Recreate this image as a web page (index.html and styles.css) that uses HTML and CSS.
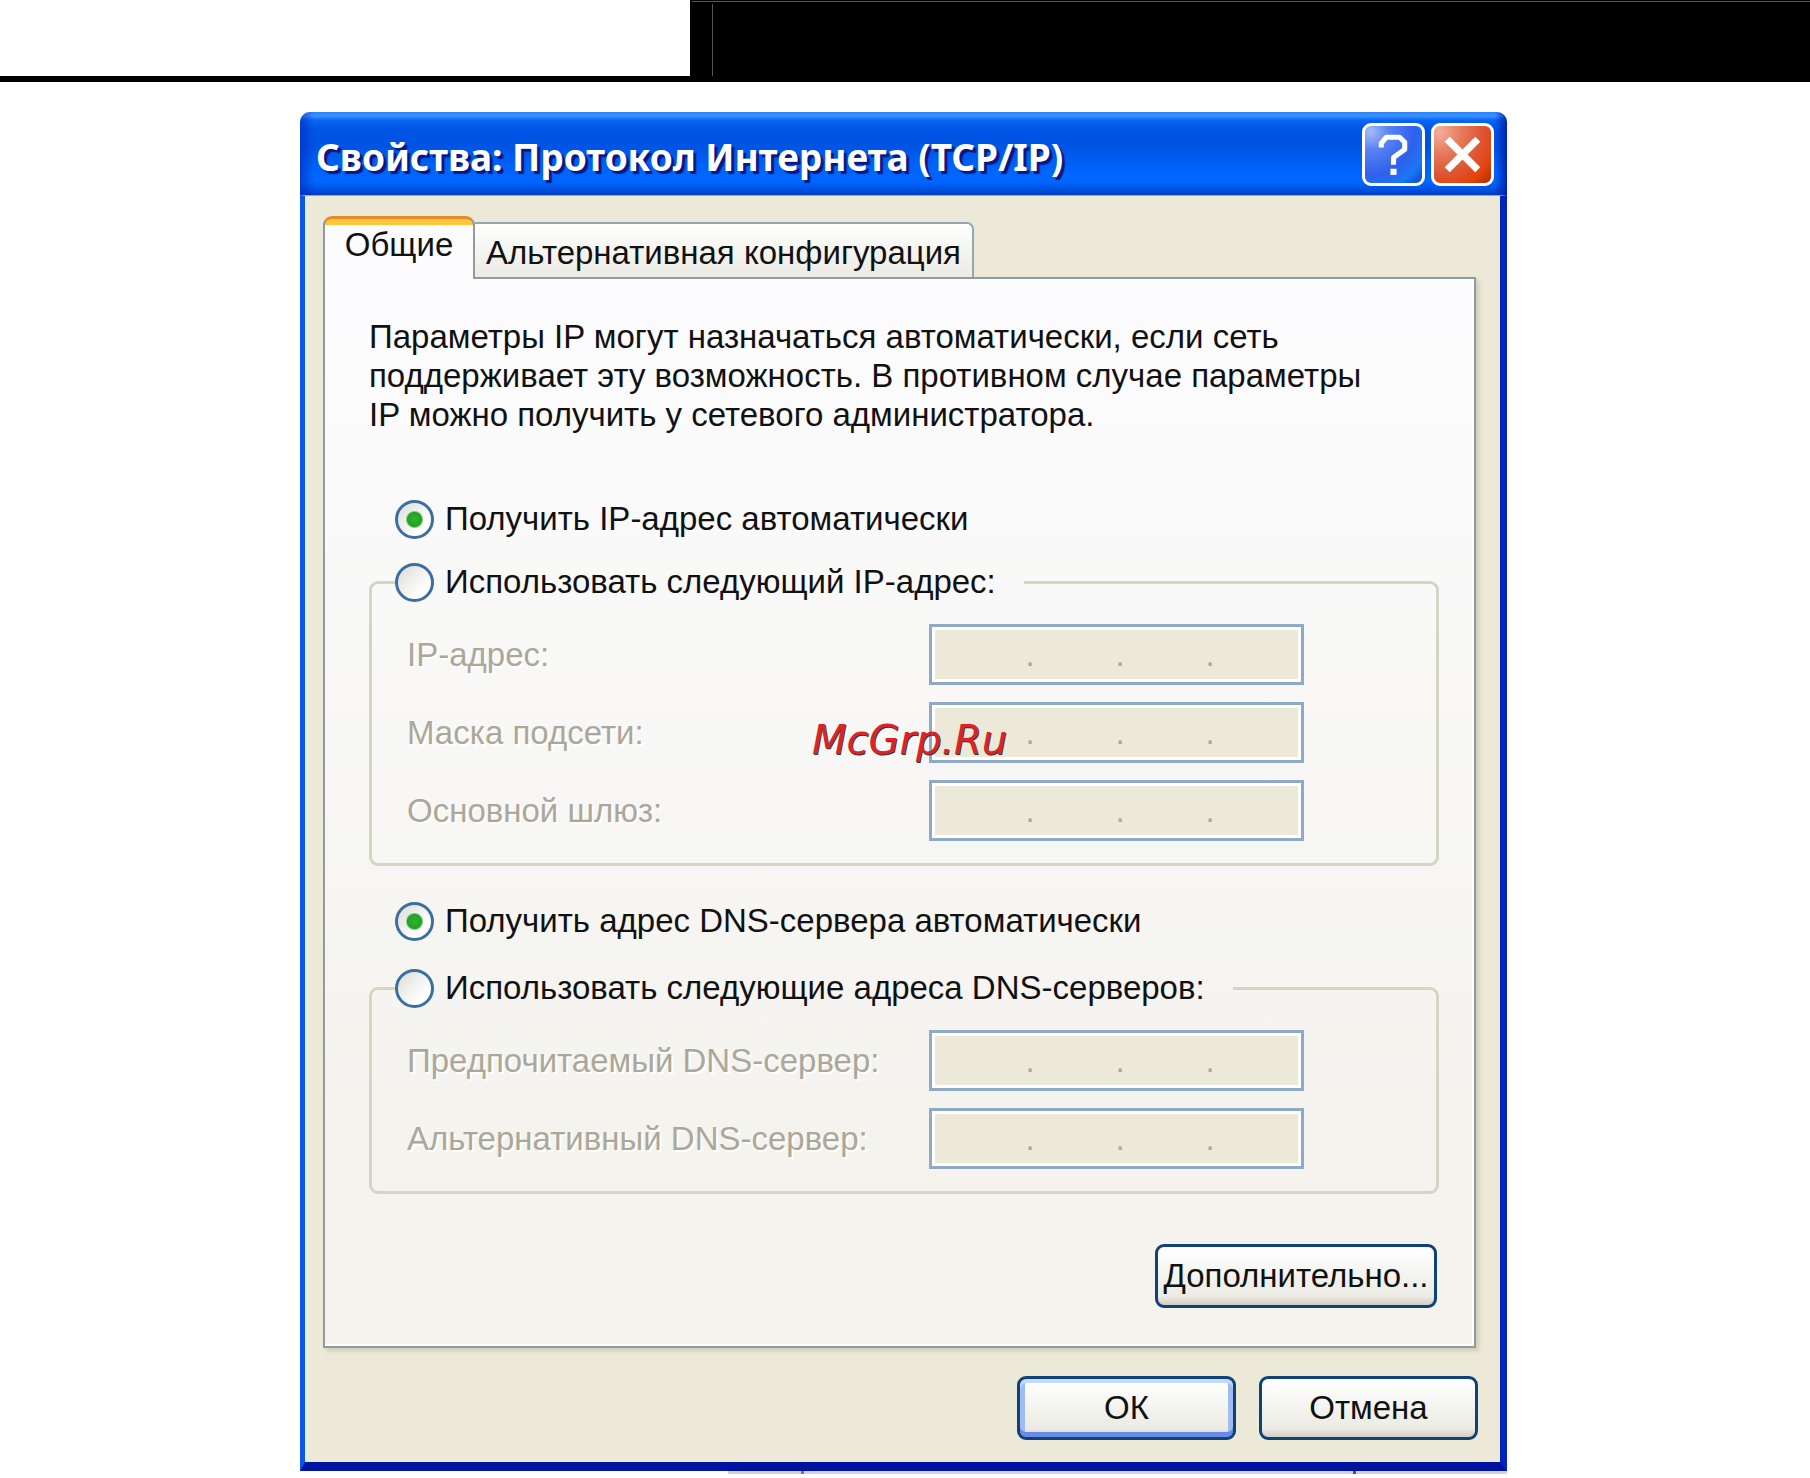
FILE: index.html
```html
<!DOCTYPE html>
<html lang="ru">
<head>
<meta charset="utf-8">
<title>Свойства: Протокол Интернета (TCP/IP)</title>
<link rel="stylesheet" href="styles.css">
</head>
<body>
<header class="page-head"><div class="head-blank"></div><div class="head-band"><div class="head-cell"></div></div></header>
<main class="page">
<form class="dialog">
  <div class="titlebar">
    <h1 class="title">Свойства: Протокол Интернета (TCP/IP)</h1>
    <button class="caption-btn help" type="button" aria-label="Справка">
      <svg viewBox="0 0 56 56"><path d="M16 21V17L21 11H34L39 16V23L28 31V38" fill="none" stroke="#fff" stroke-width="5" stroke-linejoin="round"/><rect x="25" y="42" width="6" height="6" fill="#fff"/></svg>
    </button>
    <button class="caption-btn close" type="button" aria-label="Закрыть">
      <svg viewBox="0 0 56 56"><path d="M13 13L43 43M43 13L13 43" fill="none" stroke="#fff" stroke-width="7"/></svg>
    </button>
  </div>
  <div class="body">
    <div class="tabs" role="tablist">
      <button class="tab active" type="button" role="tab" aria-selected="true">Общие</button>
      <button class="tab" type="button" role="tab" aria-selected="false">Альтернативная конфигурация</button>
    </div>
    <section class="panel">
      <p class="intro">Параметры IP могут назначаться автоматически, если сеть<br>поддерживает эту возможность. В противном случае параметры<br>IP можно получить у сетевого администратора.</p>
      <label class="choice"><input class="radio" type="radio" name="ip" checked>Получить IP-адрес автоматически</label>
      <fieldset class="group">
        <legend class="legend"><label class="choice"><input class="radio" type="radio" name="ip">Использовать следующий IP-адрес:</label></legend>
        <div class="row"><label for="ip1">IP-адрес:</label><div class="octets"><input id="ip1" disabled><span>.</span><input aria-label="IP-адрес, 2" disabled><span>.</span><input aria-label="IP-адрес, 3" disabled><span>.</span><input aria-label="IP-адрес, 4" disabled></div></div>
        <div class="row"><label for="mask1">Маска подсети:</label><div class="octets"><input id="mask1" disabled><span>.</span><input aria-label="Маска, 2" disabled><span>.</span><input aria-label="Маска, 3" disabled><span>.</span><input aria-label="Маска, 4" disabled></div><div class="watermark">McGrp.Ru</div></div>
        <div class="row"><label for="gw1">Основной шлюз:</label><div class="octets"><input id="gw1" disabled><span>.</span><input aria-label="Шлюз, 2" disabled><span>.</span><input aria-label="Шлюз, 3" disabled><span>.</span><input aria-label="Шлюз, 4" disabled></div></div>
      </fieldset>
      <label class="choice dns"><input class="radio" type="radio" name="dns" checked>Получить адрес DNS-сервера автоматически</label>
      <fieldset class="group dns-group">
        <legend class="legend"><label class="choice"><input class="radio" type="radio" name="dns">Использовать следующие адреса DNS-серверов:</label></legend>
        <div class="row"><label for="dns1">Предпочитаемый DNS-сервер:</label><div class="octets"><input id="dns1" disabled><span>.</span><input aria-label="DNS, 2" disabled><span>.</span><input aria-label="DNS, 3" disabled><span>.</span><input aria-label="DNS, 4" disabled></div></div>
        <div class="row"><label for="alt1">Альтернативный DNS-сервер:</label><div class="octets"><input id="alt1" disabled><span>.</span><input aria-label="DNS 2, 2" disabled><span>.</span><input aria-label="DNS 2, 3" disabled><span>.</span><input aria-label="DNS 2, 4" disabled></div></div>
      </fieldset>
      <div class="more"><button class="btn wide" type="button">Дополнительно...</button></div>
    </section>
    <div class="actions">
      <button class="btn default" type="submit">ОК</button>
      <button class="btn" type="button">Отмена</button>
    </div>
  </div>
</form>
<div class="under"><i class="under-a"></i><i class="under-b"></i><i class="under-c"></i></div>
</main>
</body>
</html>
```
FILE: styles.css
```css
* { box-sizing: border-box; }
body {
  margin: 0;
  background: #fff;
  color: #111;
  font: 33px/40px "Liberation Sans", Arial, sans-serif;
}
button, input { font: inherit; color: inherit; margin: 0; }

/* page header band */
.page-head { display: flex; height: 82px; border-bottom: 6px solid #000; }
.head-blank { flex: 0 0 690px; }
.head-band { flex: 1; display: flex; padding: 1px 0 0 2px; background: #000; }
.head-cell { flex: 1; border-top: 1px solid #555; padding-left: 20px; }
.head-cell::before { content: ""; display: block; height: 72px; margin-top: 2px; border-left: 1px solid #555; }

.page { padding: 30px 303px 0 300px; }
.dialog {
  background: #ece9d8;
  border-radius: 10px 10px 0 0;
  overflow: hidden;
}
.titlebar {
  display: flex;
  align-items: center;
  gap: 6px;
  height: 83px;
  padding: 2px 13px 0 16px;
  background:
    linear-gradient(90deg, rgba(0, 40, 190, .6), transparent 14px),
    linear-gradient(270deg, rgba(0, 20, 160, .8), transparent 12px),
    linear-gradient(#2a84f5 0, #3a93ff 4px, #0a66f5 8px, #0054e3 18px, #0054e3 34px, #0066ff 62px, #0066ff 70px, #0050e0 78px, #003cc0 83px);
}
.title {
  flex: 1;
  margin: 0;
  padding-top: 4px;
  color: #fff;
  font: 700 37px/48px "Noto Sans", "Open Sans", sans-serif;
  text-shadow: 3px 3px 1px #0a1883;
  white-space: nowrap;
}
.caption-btn {
  width: 63px;
  height: 63px;
  padding: 0;
  border: 3px solid #fff;
  border-radius: 9px;
}
.caption-btn svg { display: block; width: 100%; height: 100%; }
.help { background: radial-gradient(circle at 10% 10%, #a5bcf8 0, #5a82f2 25%, #2f60ec 60%, #1a78f5 80%, #0b45d0 100%); }
.close { background: radial-gradient(circle at 10% 10%, #f3b09c 0, #e67a5c 30%, #dd5430 60%, #e5430a 80%, #a82a05 100%); }

.body {
  padding: 20px 24px 22px 18px;
  border: solid;
  border-width: 1px 7px 9px 5px;
  border-color: #8fa6d8 #0024c0 #0012a0 #0a56e6;
}

/* tabs */
.tabs { display: flex; align-items: flex-end; height: 61px; }
.tab {
  height: 55px;
  padding: 4px 0 0;
  width: 499px;
  border: 2px solid #91a7b4;
  border-left-width: 0;
  border-bottom: 0;
  border-radius: 0 7px 0 0;
  background: linear-gradient(#fff, #f4f4f0 50%, #ecebe6);
  white-space: nowrap;
}
.tab.active {
  position: relative;
  width: 152px;
  height: 63px;
  margin-bottom: -2px;
  padding: 0 0 8px;
  border: 2px solid #919b9c;
  border-top: 3px solid #e68b2c;
  border-bottom: 0;
  border-radius: 9px 9px 0 0;
  background: linear-gradient(#ffc73c 6px, #fcfcfe 6px);
}

.panel {
  padding: 38px 35px 38px 44px;
  border: 2px solid #919b9c;
  background: linear-gradient(#fcfcfe, #f4f3ee 80%);
  box-shadow: 3px 3px 4px #cfccbc, inset -2px -2px 0 #fff;
}
.intro { margin: 0 0 65px; line-height: 39px; white-space: nowrap; }
.choice { display: flex; align-items: center; gap: 11px; margin-left: 26px; height: 40px; white-space: nowrap; }
.radio {
  appearance: none;
  flex: none;
  width: 39px;
  height: 39px;
  border: 3px solid #3c6f9f;
  border-radius: 50%;
  background: linear-gradient(135deg, #dcdcd7, #fff 75%);
}
.radio:checked {
  background:
    radial-gradient(circle, #2fb52f 0, #21a121 7px, transparent 9px),
    linear-gradient(135deg, #dcdcd7, #fff 75%);
}
.group {
  margin: 23px 0 0;
  padding: 22px 132px 22px 35px;
  border: 3px solid #d5d5c4;
  border-radius: 9px;
  min-width: 0;
}
.legend { margin-left: -12px; padding: 0 28px 0 0; }
.legend .choice { margin: 0; }
.row {
  position: relative;
  display: flex;
  align-items: center;
  justify-content: space-between;
  height: 61px;
  color: #aca899;
  white-space: nowrap;
  text-shadow: 2px 2px 0 #fff;
}
.row + .row { margin-top: 17px; }
.octets {
  flex: none;
  display: flex;
  width: 375px;
  height: 61px;
  padding-left: 13px;
  border: 3px solid #8eaac6;
  background: #ece9d8;
  box-shadow: inset 0 0 0 3px #fff;
  line-height: 55px;
  text-shadow: none;
}
.octets input { width: 80px; min-width: 0; padding: 0; border: 0; background: none; }
.octets span { width: 10px; text-align: center; }
.watermark {
  position: absolute;
  left: 405px;
  top: 16px;
  color: #dc2328;
  font: italic 40px/44px "DejaVu Sans", sans-serif;
  text-shadow: 1px 1px 0 #333;
}
.dns { margin-top: 35px; }
.dns-group { margin-top: 27px; }
.more { display: flex; justify-content: flex-end; margin: 50px 2px 0 0; }

.btn {
  width: 219px;
  height: 64px;
  padding: 0;
  border: 3px solid #0f4377;
  border-radius: 9px;
  background: linear-gradient(#fff, #f3f3ef 50%, #ecebe5 85%, #d3cec3);
  white-space: nowrap;
}
.wide { width: 282px; }
.default { box-shadow: inset 0 4px 0 #c3dafb, inset 0 -5px 0 #6a8ae8, inset 5px 0 0 #a0bcf0, inset -5px 0 0 #a0bcf0; }
.actions { display: flex; justify-content: flex-end; gap: 23px; margin-top: 28px; margin-right: -2px; }

/* edge of the window behind the dialog */
.under { display: flex; height: 3px; margin-left: 428px; }
.under-a { width: 76px; background: #d6d0c9; border-right: 3px solid #777; }
.under-b { flex: 1; background: #dccfd2; border-right: 3px solid #555; }
.under-c { width: 151px; background: #d8d0cd; }
```
